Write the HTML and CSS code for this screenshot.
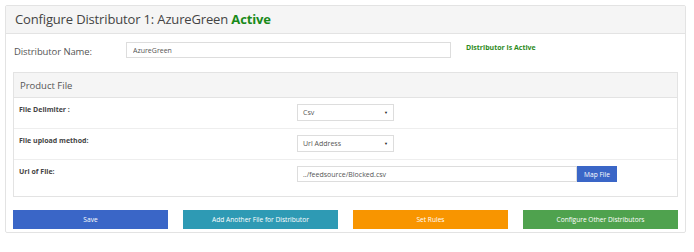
FILE: index.html
```html
<!DOCTYPE html>
<html>
<head>
<meta charset="utf-8">
<link rel="stylesheet" href="styles.css">
</head>
<body>
<div class="panel">
  <div class="panel-heading">
    <h1 class="title">Configure Distributor 1: AzureGreen <span class="active">Active</span></h1>
  </div>
  <div class="panel-body">
    <div class="name-row">
      <label class="name-label">Distributor Name:</label>
      <input class="name-input" type="text" value="AzureGreen">
      <span class="status">Distributor is Active</span>
    </div>
    <div class="inner-panel">
      <div class="inner-heading">Product File</div>
      <div class="row">
        <div class="row-label">File Delimiter :</div>
        <div class="row-field">
          <div class="select"><span>Csv</span><span class="caret">&#9660;</span></div>
        </div>
      </div>
      <div class="row">
        <div class="row-label">File upload method:</div>
        <div class="row-field">
          <div class="select"><span>Url Address</span><span class="caret">&#9660;</span></div>
        </div>
      </div>
      <div class="row row-last">
        <div class="row-label">Url of File:</div>
        <div class="row-field">
          <div class="url-group">
            <div class="url-input">../feedsource/Blocked.csv</div>
            <button class="btn btn-blue btn-map">Map File</button>
          </div>
        </div>
      </div>
    </div>
    <div class="actions">
      <button class="btn btn-blue">Save</button>
      <button class="btn btn-teal">Add Another File for Distributor</button>
      <button class="btn btn-orange">Set Rules</button>
      <button class="btn btn-green">Configure Other Distributors</button>
    </div>
  </div>
</div>
</body>
</html>
```

FILE: styles.css
```css
* { box-sizing: border-box; }
html, body { background: #fff; }
body {
  margin: 0;
  padding: 5px 8px 0 5px;
  font-family: "Open Sans", "Liberation Sans", sans-serif;
  color: #555;
}
.panel {
  width: 681px;
  height: 228px;
  border: 1px solid #e3e3e3;
  border-radius: 2px;
}
.panel-heading {
  height: 28px;
  background: #f5f5f5;
  border-bottom: 1px solid #e3e3e3;
  display: flex;
  align-items: center;
  padding-left: 9px;
}
.title {
  margin: 0;
  font-size: 13px;
  letter-spacing: -0.15px;
  font-weight: 400;
  color: #444;
  line-height: 1;
}
.active { color: #198a19; font-weight: 700; }
.panel-body { padding: 8px 7px 0 7px; }
.name-row {
  display: flex;
  align-items: flex-start;
  height: 30px;
}
.name-label {
  width: 113px;
  font-size: 9.5px;
  letter-spacing: -0.1px;
  color: #555;
  padding-left: 1px;
  padding-top: 3px;
}
.name-input {
  width: 325px;
  height: 16px;
  border: 1px solid #ddd;
  font-family: inherit;
  font-size: 7px;
  color: #555;
  padding: 0 6px;
  margin: 0;
  outline: none;
}
.status {
  margin-left: 15px;
  font-size: 7px;
  font-weight: 700;
  color: #2e8b1e;
  padding-top: 1px;
}
.inner-panel {
  border: 1px solid #e3e3e3;
  height: 125px;
}
.inner-heading {
  height: 25px;
  background: #f5f5f5;
  border-bottom: 1px solid #e3e3e3;
  font-size: 9.5px;
  color: #555;
  padding-left: 6px;
  display: flex;
  align-items: center;
}
.row {
  display: flex;
  height: 31px;
  border-bottom: 1px solid #eee;
  padding-top: 6px;
}
.row-last { border-bottom: none; }
.row-label {
  width: 283px;
  font-size: 7px;
  font-weight: 700;
  color: #444;
  padding-left: 5px;
  padding-top: 1px;
}
.row-field { flex: 1; }
.select {
  width: 97px;
  height: 17px;
  border: 1px solid #ddd;
  display: flex;
  align-items: center;
  justify-content: space-between;
  padding: 0 5px 0 5px;
  font-size: 7px;
  color: #555;
}
.caret { font-size: 4px; color: #222; }
.url-group { display: flex; }
.url-input {
  width: 280px;
  height: 16px;
  border: 1px solid #ddd;
  font-size: 7px;
  color: #555;
  padding: 0 5px;
  display: flex;
  align-items: center;
}
.btn {
  border: none;
  margin: 0;
  font-family: inherit;
  font-size: 6.6px;
  color: #fff;
  padding: 0;
  cursor: pointer;
}
.btn-map { width: 40px; height: 16px; }
.btn-blue { background: #3a66c7; }
.btn-teal { background: #2e9ab4; }
.btn-orange { background: #f89500; }
.btn-green { background: #4fa24e; }
.actions {
  display: grid;
  grid-template-columns: repeat(4, 1fr);
  gap: 15px;
  margin-top: 13px;
  width: 665px;
}
.actions .btn { height: 19px; }
```
